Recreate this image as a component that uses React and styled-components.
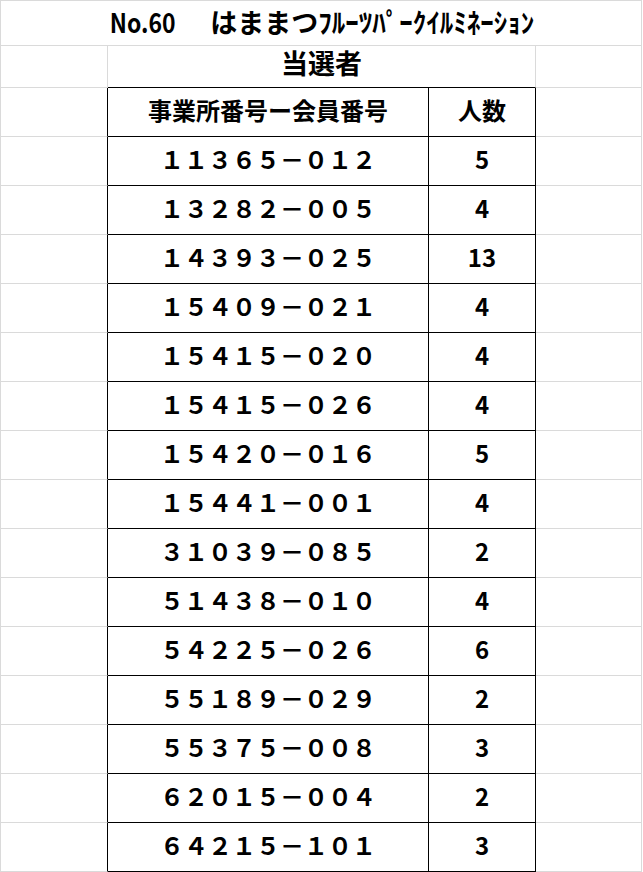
import React from 'react';
import styled, { createGlobalStyle } from 'styled-components';

const GlobalStyle = createGlobalStyle`
  html, body {
    margin: 0;
    padding: 0;
    background: #ffffff;
  }
  body {
    font-family: "Noto Sans CJK JP", "Noto Sans", sans-serif;
    color: #000000;
  }
`;

const GRID = '#dadada';
const INK = '#000000';

const Sheet = styled.div`
  display: grid;
  grid-template-columns: 107px 321px 107px 106px;
  grid-template-rows: 45px 42px repeat(16, 49px);
  width: 641px;
  border-top: 1px solid ${GRID};
  border-left: 1px solid ${GRID};
`;

const Cell = styled.div`
  box-sizing: border-box;
  display: flex;
  align-items: center;
  justify-content: center;
  grid-column: span ${p => p.$span || 1};
  padding-bottom: ${p => p.$lift || 4}px;
  border-right: 1px solid ${p => (p.$right ? INK : GRID)};
  border-bottom: 1px solid ${p => (p.$bottom ? INK : GRID)};
  font-weight: 700;
  font-size: ${p => p.$size || 24}px;
  line-height: 1;
  white-space: pre;
`;

const TitleText = styled.span`
  font-size: 27px;
`;

const Narrow = styled.span`
  display: inline-block;
  transform: scaleX(0.85);
  margin: 0 2px 0 -4px;
`;

const rows = [
  ['１１３６５－０１２', '5'],
  ['１３２８２－００５', '4'],
  ['１４３９３－０２５', '13'],
  ['１５４０９－０２１', '4'],
  ['１５４１５－０２０', '4'],
  ['１５４１５－０２６', '4'],
  ['１５４２０－０１６', '5'],
  ['１５４４１－００１', '4'],
  ['３１０３９－０８５', '2'],
  ['５１４３８－０１０', '4'],
  ['５４２２５－０２６', '6'],
  ['５５１８９－０２９', '2'],
  ['５５３７５－００８', '3'],
  ['６２０１５－００４', '2'],
  ['６４２１５－１０１', '3'],
];

const TableRow = ({ left, right }) => (
  <>
    <Cell $right />
    <Cell $right $bottom>{left}</Cell>
    <Cell $right $bottom>{right}</Cell>
    <Cell />
  </>
);

export default function App() {
  return (
    <>
      <GlobalStyle />
      <Sheet>
        <Cell $span={4} $lift={3}>
          <TitleText><Narrow>No.60</Narrow>　はままつﾌﾙｰﾂﾊﾟｰｸｲﾙﾐﾈｰｼｮﾝ</TitleText>
        </Cell>
        <Cell />
        <Cell $span={2} $bottom $size={27} $lift={9}>当選者</Cell>
        <Cell />
        <TableRow left="事業所番号ー会員番号" right="人数" />
        {rows.map(([code, count]) => (
          <TableRow key={code} left={code} right={count} />
        ))}
      </Sheet>
    </>
  );
}
